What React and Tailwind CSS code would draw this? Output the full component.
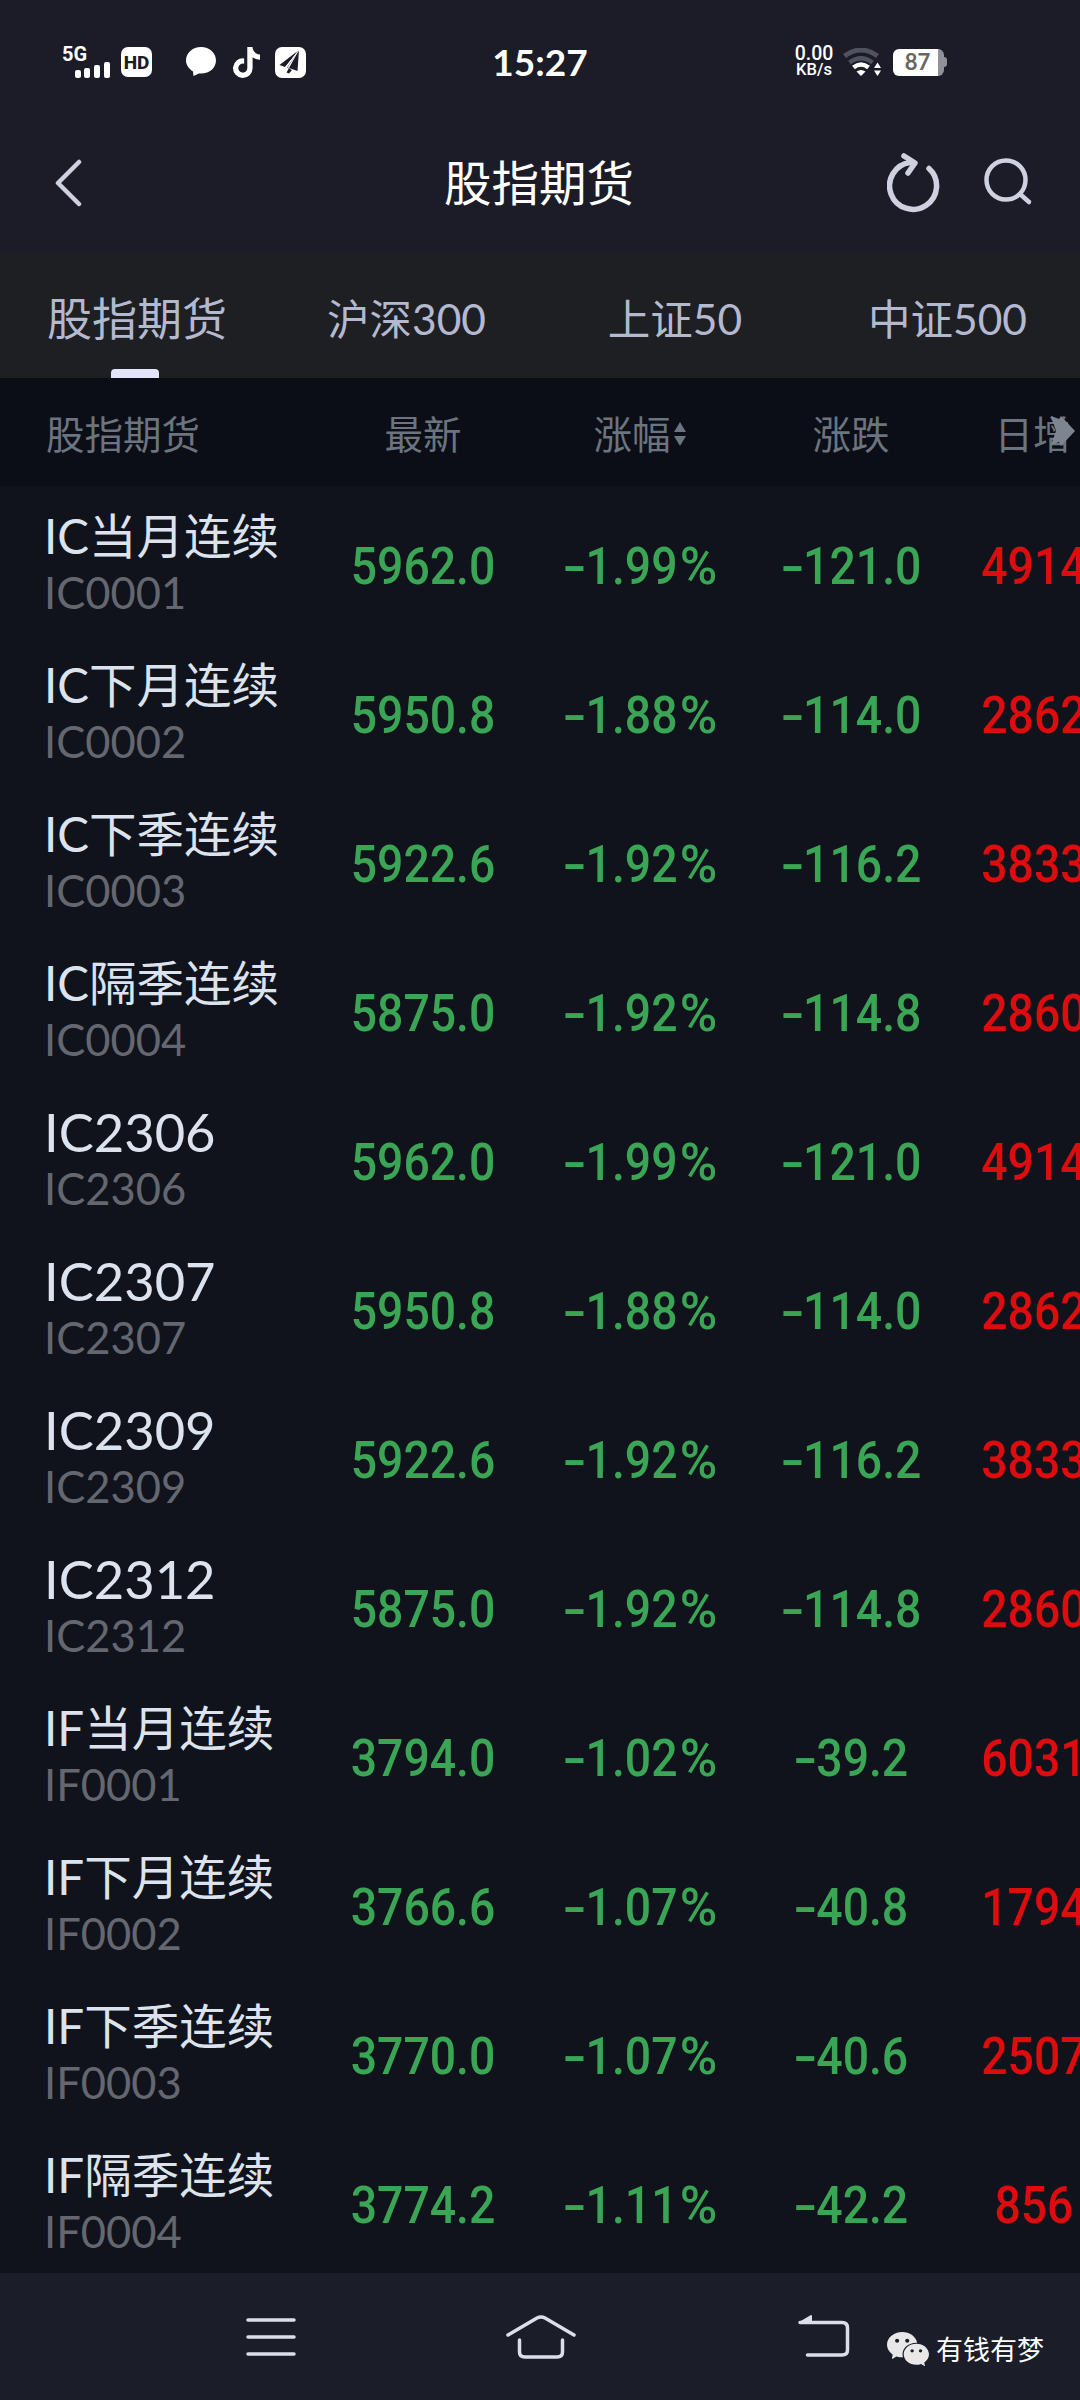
import { AiFillWechat } from "react-icons/ai";
import { FaTiktok } from "react-icons/fa";

const tabs = ["股指期货", "沪深300", "上证50", "中证500"];

const futures = [
    { name : "IC当月连续", code : "IC0001", last : "5962.0", pct : "1.99", change : "121.0", volume : "4914" },
    { name : "IC下月连续", code : "IC0002", last : "5950.8", pct : "1.88", change : "114.0", volume : "2862" },
    { name : "IC下季连续", code : "IC0003", last : "5922.6", pct : "1.92", change : "116.2", volume : "3833" },
    { name : "IC隔季连续", code : "IC0004", last : "5875.0", pct : "1.92", change : "114.8", volume : "2860" },
    { name : "IC2306", code : "IC2306", last : "5962.0", pct : "1.99", change : "121.0", volume : "4914" },
    { name : "IC2307", code : "IC2307", last : "5950.8", pct : "1.88", change : "114.0", volume : "2862" },
    { name : "IC2309", code : "IC2309", last : "5922.6", pct : "1.92", change : "116.2", volume : "3833" },
    { name : "IC2312", code : "IC2312", last : "5875.0", pct : "1.92", change : "114.8", volume : "2860" },
    { name : "IF当月连续", code : "IF0001", last : "3794.0", pct : "1.02", change : "39.2", volume : "6031" },
    { name : "IF下月连续", code : "IF0002", last : "3766.6", pct : "1.07", change : "40.8", volume : "1794" },
    { name : "IF下季连续", code : "IF0003", last : "3770.0", pct : "1.07", change : "40.6", volume : "2507" },
    { name : "IF隔季连续", code : "IF0004", last : "3774.2", pct : "1.11", change : "42.2", volume : "856" },
];

const StatusBar = () => {
    return (
        <div className="flex h-[124px] items-center text-white">
            <div className="flex w-[440px] items-center pl-[62px]">
                <div className="flex h-8 w-[59px] flex-col">
                    <span className="font-['Roboto'] text-[20px] leading-4 font-bold">5G</span>
                    <svg width="48" height="16" viewBox="0 0 48 16" fill="currentColor">
                        <rect x="13" y="8" width="6" height="8" rx="2" />
                        <rect x="22" y="6" width="6" height="10" rx="2" />
                        <rect x="32" y="3" width="6" height="13" rx="2" />
                        <rect x="42" y="0" width="6" height="16" rx="2" />
                    </svg>
                </div>
                <span className="flex h-[30px] w-[31px] items-center justify-center rounded-[7px] bg-white font-['Roboto'] text-[19px] leading-none font-extrabold text-[#1b1c28]">HD</span>
                <svg className="ml-[34px]" width="30" height="30" viewBox="0 0 30 30" fill="currentColor">
                    <path d="M15 0C6.500 0 0 6 0 13.500C0 18 3 22 7 24.500L7.500 29L13 26.500C23 27.500 30 21 30 13.500C30 6 23.500 0 15 0Z" />
                </svg>
                <FaTiktok className="ml-[17px] h-[31px] w-[27px]" />
                <svg className="ml-[15px]" width="31" height="31" viewBox="0 0 31 31">
                    <rect width="31" height="31" rx="7" fill="#fff" />
                    <path d="M24 3L4.500 18L10 20ZM24 3L12 20.500L17 23L14 26.500L11.500 25.500M24 3L22.500 24L12.500 20.500Z" fill="#1b1c28" />
                    <path d="M24 3L10.500 20.500" stroke="#fff" strokeWidth="1" />
                </svg>
            </div>
            <div className="w-[200px] pb-[2px] text-center font-['Lato'] text-[37px] leading-none font-bold">15:27</div>
            <div className="flex items-center pl-[154px]">
                <div className="w-[40px] text-center font-['Roboto'] leading-4 font-medium">
                    <div className="text-[19.500px]">0.00</div>
                    <div className="text-[16.500px]">KB/s</div>
                </div>
                <svg className="ml-[9px]" width="38" height="28" viewBox="0 0 38 28" fill="none">
                    <path d="M1.500 8Q18 -4 34.500 8" stroke="#50525f" strokeWidth="5" />
                    <path d="M6.500 14.500Q18 6 29.500 14.500" stroke="#50525f" strokeWidth="4.500" />
                    <path d="M10.500 19.500Q18 13.500 25.500 19.500" stroke="#fff" strokeWidth="4.500" />
                    <path d="M13.500 23.500Q18 20.500 22.500 23.500L18 28Z" fill="#fff" />
                    <path d="M31 20L34.500 14.500L38 20ZM31 22.500L34.500 28L38 22.500Z" fill="#fff" />
                </svg>
                <div className="ml-[12px] flex h-[27px] w-[51px] items-center justify-center rounded-[6px] border-r-[6px] border-[#8f9098] bg-white pl-[4px] font-['Lato'] text-[22px] leading-none font-bold text-[#66665f]">87</div>
                <div className="h-[10px] w-[3px] rounded-r-sm bg-[#8f9098]" />
            </div>
        </div>
    )
}

const Header = () => {
    return (
        <header className="flex h-[129px] items-center justify-between pr-[47px] pb-[12px] pl-[54px] text-[#cfd1e0]">
            <svg className="mr-[109px]" width="28" height="48" viewBox="0 0 28 48" fill="none" stroke="currentColor" strokeWidth="4.500" strokeLinecap="round" strokeLinejoin="round">
                <path d="M25 3L4 24L25 45" />
            </svg>
            <h1 className="text-[47.500px] leading-none text-white">股指期货</h1>
            <div className="flex gap-[40px]">
                <svg width="54" height="60" viewBox="0 0 54 60" fill="none" stroke="currentColor" strokeWidth="5.500" strokeLinecap="round" strokeLinejoin="round">
                    <path d="M23 9.500A23.500 23.500 0 1 0 42 15.500" />
                    <path d="M17 3L28 10L21 20" />
                </svg>
                <svg className="mt-1" width="52" height="52" viewBox="0 0 52 52" fill="none" stroke="currentColor" strokeWidth="4.500" strokeLinecap="round">
                    <circle cx="25" cy="23" r="19.500" />
                    <path d="M39.500 37.500L48 45" />
                </svg>
            </div>
        </header>
    )
}

const Tabs = () => {
    return (
        <nav className="grid h-[125px] grid-cols-[274px_265px_272px_273px] bg-[#1e1f22] leading-none text-[#b4b9d0]">
            {
                tabs.map((name, index) => (
                    <div key={name} className="relative flex items-center justify-center pt-[8px]">
                        <span className={index === 0 ? "text-[45px]" : "text-[42.500px]"}>{name}</span>
                        {
                            index === 0 && <span className="absolute bottom-0 left-[111px] h-[9px] w-[48px] rounded-t-sm bg-[#e4e5fa]" />
                        }
                    </div>
                ))
            }
        </nav>
    )
}

const TableHead = () => {
    return (
        <div className="relative grid h-[108px] shrink-0 grid-cols-[318px_210px_226px_194px_170px] items-center bg-[#0b0e16] pt-[4px] text-center text-[38.500px] leading-none text-[#6c747f]">
            <span className="pl-[46px] text-left">股指期货</span>
            <span>最新</span>
            <span className="flex items-center justify-center gap-[3px] pr-[3px]">
                涨幅
                <svg width="12" height="24" viewBox="0 0 12 24" fill="currentColor">
                    <path d="M0 10L6 0L12 10ZM0 14L6 24L12 14Z" />
                </svg>
            </span>
            <span>涨跌</span>
            <span>日增</span>
            <svg className="absolute top-[38px] left-[1051px]" width="24" height="30" viewBox="0 0 24 30" fill="#7d8591">
                <path d="M0 0L8 3L10 0L24 15L10 30L8 26L0 29L5 15Z" />
            </svg>
        </div>
    )
}

const Minus = () => <span className="inline-block w-[25px] origin-left scale-x-150 text-left">-</span>

const Row = ({name, code, last, pct, change, volume}) => {

    const onlyCode = name === code;

    return (
        <div className="grid h-[149px] shrink-0 grid-cols-[318px_210px_226px_194px_170px] items-center text-center">
            <div className="pt-[6px] pl-[44px] text-left whitespace-nowrap">
                <div className={onlyCode ? "text-[52.500px] leading-[57px] text-[#dce3ee]" : "text-[47.500px] leading-[57px] text-[#dce3ee]"}>{name}</div>
                <div className="text-[43.500px] leading-[57px] text-[#64676f]">{code}</div>
            </div>
            <div className="scale-x-90 pt-[13px] font-['Roboto'] text-[51.500px] leading-none font-medium text-[#3aa655]">{last}</div>
            <div className="scale-x-90 pt-[13px] pr-[6px] font-['Roboto'] text-[51.500px] leading-none font-medium text-[#3aa655]">
                <Minus />{pct}<span className="ml-[2px] inline-block origin-left scale-x-110">%</span>
            </div>
            <div className="scale-x-90 pt-[13px] font-['Roboto'] text-[51.500px] leading-none font-medium text-[#3aa655]"><Minus />{change}</div>
            <div className="scale-x-90 pt-[13px] pl-[2px] font-['Roboto'] text-[51.500px] leading-none font-medium text-[#dc0c0f]">{volume}</div>
        </div>
    )
}

const BottomBar = () => {
    return (
        <footer className="flex h-[127px] shrink-0 items-start bg-[#1b1d28] text-[#dcdeec]">
            <svg className="mt-[45px] ml-[246px]" width="50" height="38" viewBox="0 0 50 38" stroke="currentColor" strokeWidth="3.500" strokeLinecap="round">
                <path d="M2 2H48M2 19H48M2 36H48" />
            </svg>
            <svg className="mt-[41px] ml-[210px]" width="70" height="46" viewBox="0 0 70 46" fill="none" stroke="currentColor" strokeWidth="3.500" strokeLinecap="round" strokeLinejoin="round">
                <path d="M2 21L31 4Q35 2 39 4L68 21" />
                <path d="M13.500 26V38Q13.500 43 19 43H51Q56.500 43 56.500 38V26" />
            </svg>
            <svg className="mt-[41px] ml-[222px]" width="52" height="44" viewBox="0 0 52 44" fill="none" stroke="currentColor" strokeWidth="3.500" strokeLinecap="round" strokeLinejoin="round">
                <path d="M2 8.500H44Q49.500 8.500 49.500 14V36Q49.500 41 44 41H9.500" />
                <path d="M2 8.500L13 2V8.500Z" fill="currentColor" strokeWidth="2" />
            </svg>
            <AiFillWechat className="mt-[52px] ml-[34px] h-[48px] w-[48px] text-[#e8e8e8]" />
            <span className="mt-[62px] ml-[4px] text-[27px] leading-[30px] text-white">有钱有梦</span>
        </footer>
    )
}

export default function App() {
    return (
        <div className="flex h-[2400px] w-[1080px] flex-col overflow-hidden bg-[#10131b] font-['Lato','Noto_Sans_CJK_SC',sans-serif]">
            <div className="shrink-0 bg-[#1b1c28]">
                <StatusBar />
                <Header />
                <Tabs />
            </div>
            <main className="flex min-h-0 flex-1 flex-col overflow-hidden">
                <TableHead />
                {
                    futures.map((future) => <Row key={future.code} {...future} />)
                }
            </main>
            <BottomBar />
        </div>
    )
}
